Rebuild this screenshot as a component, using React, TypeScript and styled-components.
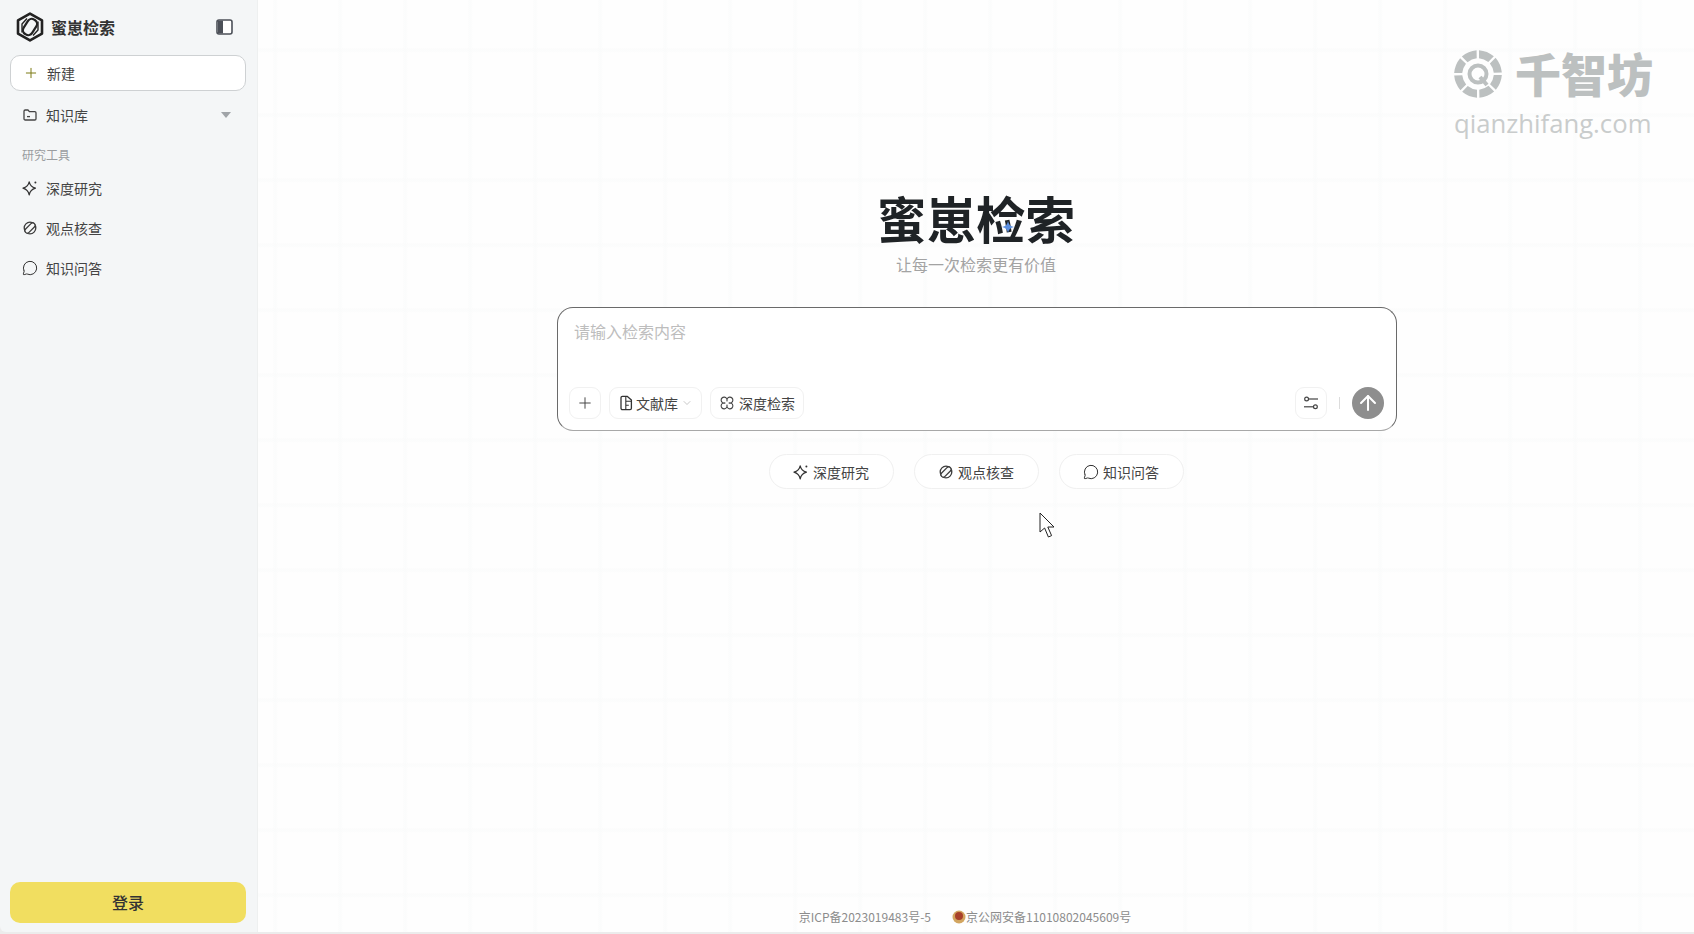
import React from "react";
import styled, { createGlobalStyle } from "styled-components";
import { Plus, ChevronDown, ArrowUp, MessageCircle } from "lucide-react";

const Global = createGlobalStyle`
  html, body { margin: 0; padding: 0; height: 100%; background: #ececec; overflow: hidden; }
  #root { height: 934px; width: 1694px; }
  * { box-sizing: border-box; }
  body { font-family: "Noto Sans CJK SC", "Noto Sans", sans-serif; color: #333; }
`;

const Page = styled.div`
  display: flex;
  width: 1694px;
  height: 932px;
  overflow: hidden;
`;

const Sidebar = styled.aside`
  width: 258px;
  flex: none;
  display: flex;
  flex-direction: column;
  background: #f4f6f7;
  border-right: 1px solid #eef0f0;
  padding: 0 10px 9px;
  border-bottom-left-radius: 6px;
`;

const Brand = styled.div`
  height: 55px;
  display: flex;
  align-items: center;
  padding: 0 14px 1px 6px;
  gap: 7px;
`;

const BrandName = styled.div`
  font-size: 16px;
  font-weight: 700;
  color: #333;
  flex: 1;
  line-height: 20px;
`;

const NewButton = styled.button`
  height: 36px;
  width: 236px;
  margin-bottom: 4px;
  display: flex;
  align-items: center;
  gap: 8px;
  padding: 0 0 0 12px;
  background: #fff;
  border: 1px solid #ced1d3;
  border-radius: 10px;
  font: inherit;
  font-size: 14px;
  color: #444;
`;

const NavRow = styled.div`
  height: 40px;
  display: flex;
  align-items: center;
  gap: 8px;
  padding: 0 0 0 12px;
  font-size: 14px;
  color: #444;
`;

const Caret = styled.span`
  margin-left: auto;
  margin-right: 16px;
  width: 0;
  height: 0;
  border-left: 5px solid transparent;
  border-right: 5px solid transparent;
  border-top: 6px solid #a0a4a8;
`;

const SectionLabel = styled.div`
  font-size: 12px;
  line-height: 20px;
  color: #9a9da0;
  padding-left: 12px;
  margin: 10px 0 3px;
`;

const LoginButton = styled.button`
  margin-top: auto;
  height: 41px;
  width: 236px;
  border: none;
  border-radius: 10px;
  background: #f1de60;
  font: inherit;
  font-size: 16px;
  font-weight: 500;
  color: #333;
  padding: 0 0 2px;
`;

const Main = styled.main`
  position: relative;
  flex: 1;
  display: flex;
  flex-direction: column;
  align-items: center;
  padding-top: 188px;
  background-color: #fefefe;
  background-image:
    linear-gradient(90deg, transparent 0, #fafbfb 2px, transparent 5px),
    linear-gradient(180deg, transparent 0, #fafbfb 2px, transparent 5px);
  background-size: 65px 65px;
  background-position: 15px 48px;
`;

const Watermark = styled.div`
  position: absolute;
  top: 44px;
  right: 40px;
  width: 200px;
  display: flex;
  flex-direction: column;
`;

const WatermarkTop = styled.div`
  display: flex;
  align-items: center;
  gap: 13px;
  height: 60px;
`;

const WatermarkName = styled.div`
  font-size: 46px;
  font-weight: 900;
  line-height: 60px;
  margin-top: -4px;
  color: #bcc0c0;
  white-space: nowrap;
`;

const WatermarkUrl = styled.div`
  font-family: "Open Sans", sans-serif;
  font-size: 25.7px;
  line-height: 36px;
  margin-top: 2px;
  color: #c9cccc;
  white-space: nowrap;
`;

const Title = styled.h1`
  position: relative;
  margin: 0;
  font-size: 49.5px;
  line-height: 60px;
  font-weight: 700;
  color: #1f2326;
`;

const TitleSpark = styled.svg`
  position: absolute;
  left: 124px;
  top: 32px;
  width: 14px;
  height: 14px;
`;

const Subtitle = styled.div`
  margin-top: 4px;
  font-size: 16px;
  line-height: 24px;
  color: #a3a3a3;
`;

const SearchBox = styled.div`
  margin-top: 31px;
  margin-left: 2px;
  width: 840px;
  height: 124px;
  background: #fff;
  border: 1px solid #6a6a6a;
  border-bottom-color: #a8a8a8;
  border-radius: 16px;
  padding: 11px 12px 11px 11px;
  display: flex;
  flex-direction: column;
  justify-content: space-between;
`;

const Placeholder = styled.div`
  font-size: 16px;
  line-height: 24px;
  color: #bdbdbd;
  padding-left: 5px;
`;

const Toolbar = styled.div`
  display: flex;
  align-items: center;
  gap: 8px;
`;

const ToolButton = styled.button<{ $square?: boolean }>`
  height: 32px;
  ${(p) => (p.$square ? "width: 32px; justify-content: center; padding: 0;" : "padding: 0 8px 1px 9px;")}
  display: flex;
  align-items: center;
  gap: 3px;
  background: #fff;
  border: 1px solid #f1f1f1;
  border-radius: 9px;
  font: inherit;
  font-size: 14px;
  color: #444;
`;

const ToolLabel = styled.span`
  margin-left: 2px;
`;

const RightTools = styled.div`
  margin-left: auto;
  display: flex;
  align-items: center;
  gap: 12px;
`;

const Divider = styled.span`
  width: 1px;
  height: 12px;
  background: #dcdcdc;
`;

const SendButton = styled.button`
  width: 32px;
  height: 32px;
  border: none;
  border-radius: 50%;
  background: #8e8e8e;
  color: #fff;
  display: flex;
  align-items: center;
  justify-content: center;
  padding: 0;
`;

const Pills = styled.div`
  margin-top: 23px;
  display: flex;
  gap: 20px;
`;

const Pill = styled.button`
  width: 125px;
  height: 35px;
  display: flex;
  align-items: center;
  justify-content: center;
  gap: 4px;
  background: #fff;
  border: 1px solid #f0f0f0;
  border-radius: 18px;
  font: inherit;
  font-size: 14px;
  color: #444;
`;

const Cursor = styled.svg`
  position: absolute;
  left: 781px;
  top: 512px;
  width: 17px;
  height: 26px;
`;

const Footer = styled.footer`
  margin-top: auto;
  margin-bottom: 7px;
  padding-right: 22px;
  display: flex;
  align-items: center;
  gap: 21px;
  font-size: 12px;
  line-height: 16px;
  color: #8c8c8c;
`;

const FooterItem = styled.span`
  display: flex;
  align-items: center;
`;

const SparkleIcon = ({ size = 16 }: { size?: number }) => (
  <svg width={size} height={size} viewBox="0 0 16 16" fill="none" stroke="#333" strokeWidth="1.25" strokeLinejoin="round">
    <path d="M7.2 1.8C7.9 5.2 9.6 7 13.4 8.2 9.6 9.4 7.9 11.2 7.2 14.8 6.5 11.2 4.8 9.4 1 8.2 4.8 7 6.5 5.2 7.2 1.8Z" />
    <circle cx="13.4" cy="2.4" r="1" fill="#333" stroke="none" />
  </svg>
);

const CheckIcon = ({ size = 16 }: { size?: number }) => (
  <svg width={size} height={size} viewBox="0 0 16 16" fill="none" stroke="#3c3c3c" strokeWidth="1.3">
    <circle cx="8" cy="8" r="5.8" />
    <rect x="1.8" y="5.6" width="12.4" height="4.8" rx="2.4" transform="rotate(-45 8 8)" fill="#f8f9f9" />
  </svg>
);

const ChatIcon = ({ size = 16 }: { size?: number }) => (
  <MessageCircle size={size} strokeWidth={1.5} color="#333" />
);

const FolderIcon = () => (
  <svg width="16" height="16" viewBox="0 0 16 16" fill="none" stroke="#444" strokeWidth="1.3" strokeLinejoin="round">
    <path d="M2 4.2C2 3.5 2.5 3 3.2 3H6L7.4 4.6H12.8C13.5 4.6 14 5.1 14 5.8V11.8C14 12.5 13.5 13 12.8 13H3.2C2.5 13 2 12.5 2 11.8Z" />
    <path d="M5 9.6H8" />
  </svg>
);

const FileIcon = () => (
  <svg width="14" height="16" viewBox="0 0 14 16" fill="none" stroke="#333" strokeWidth="1.3" strokeLinejoin="round">
    <path d="M2 2.8C2 2 2.6 1.4 3.4 1.4H8.4L12.4 5V13.2C12.4 14 11.8 14.6 11 14.6H3.4C2.6 14.6 2 14 2 13.2Z" />
    <path d="M6.8 1.6V6.2H12.2M6.8 6.2V14.4M6.8 10.2H9.8" strokeWidth="1.1" />
  </svg>
);

const DeepIcon = () => (
  <svg width="14" height="14" viewBox="0 0 14 14" fill="none" stroke="#444" strokeWidth="1.1" strokeLinejoin="round">
    <path d="M7 5A3 3 0 1 1 9 7 3 3 0 1 1 7 9 3 3 0 1 1 5 7 3 3 0 1 1 7 5Z" />
  </svg>
);

const SlidersIcon = () => (
  <svg width="16" height="16" viewBox="0 0 16 16" fill="none" stroke="#444" strokeWidth="1.2">
    <circle cx="3.6" cy="4" r="1.9" />
    <path d="M5.6 4H15" />
    <circle cx="12.4" cy="11.8" r="1.9" />
    <path d="M1 11.8H10.4" />
  </svg>
);

const LogoMark = () => (
  <svg width="28" height="30" viewBox="0 0 28 30" fill="none" stroke="#222" strokeLinejoin="round">
    <path d="M14 1.6 26 8.4V21.6L14 28.4 2 21.6V8.4Z" strokeWidth="2.6" />
    <rect x="9" y="6.5" width="10" height="17" rx="4.6" transform="rotate(32 14 15)" strokeWidth="2.2" />
    <path d="M6 20.5 6 12 11 6.5M22 9.5 22 18 17 23.5" strokeWidth="1.4" />
  </svg>
);

const PanelIcon = () => (
  <svg width="17" height="16" viewBox="0 0 17 16">
    <rect x="1" y="1" width="15" height="14" rx="2" fill="#fff" stroke="#4c5058" strokeWidth="1.6" />
    <path d="M2 1.6H7V14.4H2Z" fill="#4c5058" />
  </svg>
);

const WatermarkLogo = () => (
  <svg width="48" height="48" viewBox="-24 -24 48 48" style={{ flex: "none" }}>
    {[22, 67, 112, 157, 202, 247, 292, 337].map((a) => (
      <path key={a} d="M-8 -22.5Q0 -25 8 -22.5L5 -15Q0 -16.5 -5 -15Z" fill="#bcc0c0" transform={`rotate(${a})`} />
    ))}
    <circle cx="0" cy="0" r="8.5" fill="none" stroke="#bcc0c0" strokeWidth="4" />
    <path d="M2 3 9 11" stroke="#bcc0c0" strokeWidth="4" />
  </svg>
);

const Emblem = () => (
  <svg width="14" height="14" viewBox="0 0 14 14" style={{ flex: "none" }}>
    <circle cx="7" cy="7" r="6.5" fill="#d2a560" />
    <circle cx="7" cy="6" r="4" fill="#a8402a" />
  </svg>
);

export default function App() {
  return (
    <>
      <Global />
      <Page>
        <Sidebar>
          <Brand>
            <LogoMark />
            <BrandName>蜜崽检索</BrandName>
            <PanelIcon />
          </Brand>
          <NewButton>
            <Plus size={16} strokeWidth={1.5} color="#7c7a14" />
            新建
          </NewButton>
          <NavRow>
            <FolderIcon />
            知识库
            <Caret />
          </NavRow>
          <SectionLabel>研究工具</SectionLabel>
          <NavRow>
            <SparkleIcon />
            深度研究
          </NavRow>
          <NavRow>
            <CheckIcon />
            观点核查
          </NavRow>
          <NavRow>
            <ChatIcon />
            知识问答
          </NavRow>
          <LoginButton>登录</LoginButton>
        </Sidebar>
        <Main>
          <Watermark>
            <WatermarkTop>
              <WatermarkLogo />
              <WatermarkName>千智坊</WatermarkName>
            </WatermarkTop>
            <WatermarkUrl>qianzhifang.com</WatermarkUrl>
          </Watermark>
          <Title>
            蜜崽检索
            <TitleSpark viewBox="0 0 14 14">
              <path d="M7 1C7.5 4.5 9.5 6.5 13 7 9.5 7.5 7.5 9.5 7 13 6.5 9.5 4.5 7.5 1 7 4.5 6.5 6.5 4.5 7 1Z" fill="#5b8fe0" />
            </TitleSpark>
          </Title>
          <Subtitle>让每一次检索更有价值</Subtitle>
          <SearchBox>
            <Placeholder>请输入检索内容</Placeholder>
            <Toolbar>
              <ToolButton $square>
                <Plus size={18} strokeWidth={1.3} color="#444" />
              </ToolButton>
              <ToolButton>
                <FileIcon />
                文献库
                <ChevronDown size={12} strokeWidth={1.3} color="#aaa" />
              </ToolButton>
              <ToolButton>
                <DeepIcon />
                <ToolLabel>深度检索</ToolLabel>
              </ToolButton>
              <RightTools>
                <ToolButton $square>
                  <SlidersIcon />
                </ToolButton>
                <Divider />
                <SendButton>
                  <ArrowUp size={24} strokeWidth={2} color="#fff" />
                </SendButton>
              </RightTools>
            </Toolbar>
          </SearchBox>
          <Pills>
            <Pill>
              <SparkleIcon />
              深度研究
            </Pill>
            <Pill>
              <CheckIcon />
              观点核查
            </Pill>
            <Pill>
              <ChatIcon />
              知识问答
            </Pill>
          </Pills>
          <Cursor viewBox="0 0 17 26">
            <path d="M1 1V20L5.6 16 9.4 25 12.6 23.6 8.8 15H15Z" fill="#fff" stroke="#222" strokeWidth="1" strokeLinejoin="miter" />
          </Cursor>
          <Footer>
            <FooterItem>京ICP备2023019483号-5</FooterItem>
            <FooterItem>
              <Emblem />
              京公网安备11010802045609号
            </FooterItem>
          </Footer>
        </Main>
      </Page>
    </>
  );
}
